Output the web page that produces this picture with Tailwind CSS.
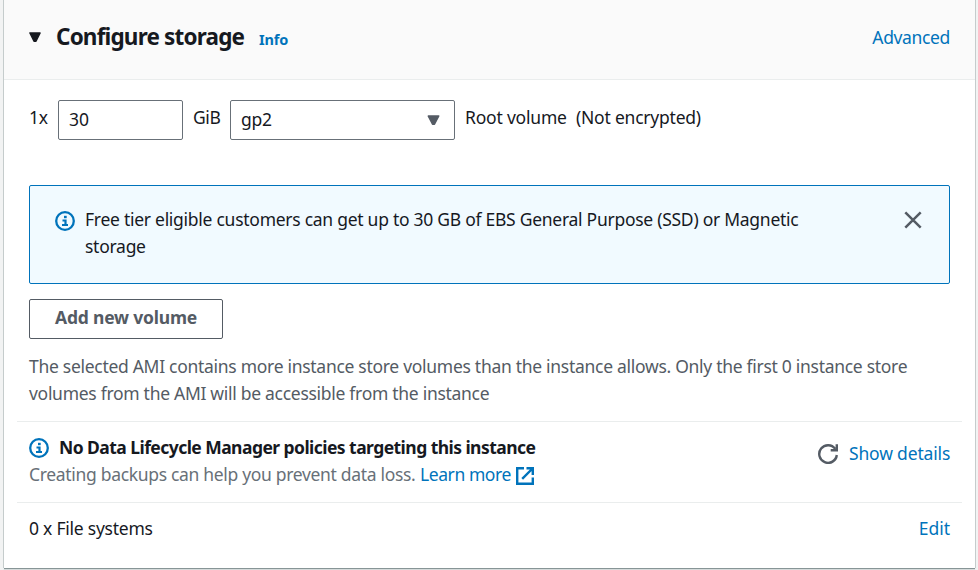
<!DOCTYPE html>
<html lang="en">
<head>
<meta charset="utf-8">
<title>Configure storage</title>
<script src="https://cdn.jsdelivr.net/npm/@tailwindcss/browser@4"></script>
</head>
<body class="h-[570px] w-[978px] overflow-hidden bg-[#f2f3f3] pl-1 pr-[3px] font-['Noto_Sans','Open_Sans',sans-serif] text-[17.5px] leading-[27px] text-[#16191f]">
<main class="h-[568px] bg-white shadow-[0_1px_0_#879596,-1px_0_0_#c5cccc,1px_0_0_#c5cccc,0_2px_1px_#d5dbdb]">
  <header class="flex h-20 items-start border-b border-[#eaeded] bg-[#fafafa] pl-[25px] pr-[25px] pt-[24px]">
    <svg class="mt-[8px] h-[11px] w-[12px] shrink-0" viewBox="0 0 12 11"><path d="M.9 1H11.1L7 9.3H5Z" fill="#16191f" stroke="#16191f" stroke-width="1.4" stroke-linejoin="round"/></svg>
    <h2 class="-mt-px ml-[15px] w-[189px] whitespace-nowrap text-[22.5px] font-bold tracking-[-0.82px]">Configure storage</h2>
    <a class="ml-[14px] mt-[2px] whitespace-nowrap text-[14.5px] font-bold tracking-[-0.15px] text-[#0073bb]">Info</a>
    <a class="ml-auto whitespace-nowrap tracking-[-0.35px] text-[#0073bb]">Advanced</a>
  </header>

  <div class="flex h-[105px] items-start whitespace-nowrap pl-[25px] pt-5">
    <span class="mt-1 w-[29px] tracking-[-0.3px]">1x</span>
    <div class="flex h-10 w-[125px] items-center rounded-[2px] border border-[#687078] pb-[2px] pl-[10px] tracking-[-0.1px]">30</div>
    <span class="ml-[10px] mt-1 w-[37px] tracking-[-0.4px]">GiB</span>
    <div class="flex h-10 w-[225px] items-center justify-between rounded-[2px] border border-[#687078] pl-[10px] pr-[14px] tracking-[-0.3px]">
      <span class="-mt-[2px]">gp2</span>
      <svg class="h-[11px] w-[13px]" viewBox="0 0 13 11"><path d="M1.2 1H11.8L7.5 9.3H5.5Z" fill="#545b64" stroke="#545b64" stroke-width="1.4" stroke-linejoin="round"/></svg>
    </div>
    <span class="ml-[10px] mt-1 w-[111px] tracking-[-0.2px]">Root volume</span>
    <span class="mt-1 tracking-[-0.22px]">(Not encrypted)</span>
  </div>

  <section class="ml-[25px] flex h-[99px] w-[921px] items-start rounded-[2px] border border-[#0073bb] bg-[#f1faff] pl-[25px] pr-7 pt-[20px]">
    <svg class="mt-[5px] h-5 w-5 shrink-0" viewBox="0 0 20 20" fill="none" stroke="#0073bb"><circle cx="10" cy="10" r="8.8" stroke-width="2.3"/><path d="M7.5 9.5H10.5V14M7 14H13" stroke-width="2.2"/><path d="M9 6H11.7" stroke-width="2.4"/></svg>
    <p class="ml-[10px] whitespace-nowrap tracking-[-0.27px]">Free tier eligible customers can get up to 30 GB of EBS General Purpose (SSD) or Magnetic<br>storage</p>
    <svg class="ml-auto mt-[6px] h-4 w-4 shrink-0 overflow-visible" viewBox="0 0 16 16" fill="none" stroke="#545b64" stroke-width="2.5"><path d="M.3.3L15.7 15.7M15.7.3L.3 15.7"/></svg>
  </section>

  <button class="ml-[25px] mt-[15px] flex h-10 w-[194px] items-center whitespace-nowrap rounded-[2px] border border-[#545b64] bg-white pb-[3px] pl-[25px] font-bold tracking-[-0.2px] text-[#545b64]">Add new volume</button>

  <p class="ml-[25px] mt-[14px] h-[68px] whitespace-nowrap tracking-[-0.29px] text-[#545b64]">The selected AMI contains more instance store volumes than the instance allows. Only the first 0 instance store<br>volumes from the AMI will be accessible from the instance</p>

  <section class="ml-[13px] flex h-[81px] w-[945px] items-start border-t border-[#eaeded] px-3 pt-3">
    <div class="whitespace-nowrap">
      <div class="flex h-[27px]">
        <svg class="mt-[4px] h-5 w-5 shrink-0" viewBox="0 0 20 20" fill="none" stroke="#0073bb"><circle cx="10" cy="10" r="8.8" stroke-width="2.3"/><path d="M7.5 9.5H10.5V14M7 14H13" stroke-width="2.2"/><path d="M9 6H11.7" stroke-width="2.4"/></svg>
        <h3 class="ml-[10px] font-bold tracking-[-0.55px]">No Data Lifecycle Manager policies targeting this instance</h3>
      </div>
      <div class="flex h-[27px]">
        <span class="w-[391px] tracking-[-0.32px] text-[#687078]">Creating backups can help you prevent data loss.</span>
        <a class="flex text-[#0073bb]"><span class="w-[96px] tracking-[-0.42px]">Learn more</span>
          <svg class="mt-[6px] h-[18px] w-[18px]" viewBox="0 0 18 18" fill="none" stroke="#0073bb" stroke-width="2.4"><path d="M8 1.2H1.2V16.8H16.8V10.5M10.5 1.2H16.8V8M16.5 1.5L6.2 11.8"/></svg></a>
      </div>
    </div>
    <svg class="ml-auto mt-[10px] h-5 w-5 shrink-0" viewBox="0 0 20 20" fill="none" stroke="#545b64" stroke-width="2.4"><path d="M18.8 11A8.8 8.8 0 1 1 17.2 4.9M18.8 .3V6.2H12.7"/></svg>
    <a class="ml-[11px] mt-[6px] w-[101px] whitespace-nowrap tracking-[-0.17px] text-[#0073bb]">Show details</a>
  </section>

  <section class="ml-[13px] flex w-[945px] items-start justify-between border-t border-[#eaeded] px-3 pt-3">
    <span class="tracking-[-0.24px]">0 x File systems</span>
    <a class="tracking-[0px] text-[#0073bb]">Edit</a>
  </section>
</main>
</body>
</html>
